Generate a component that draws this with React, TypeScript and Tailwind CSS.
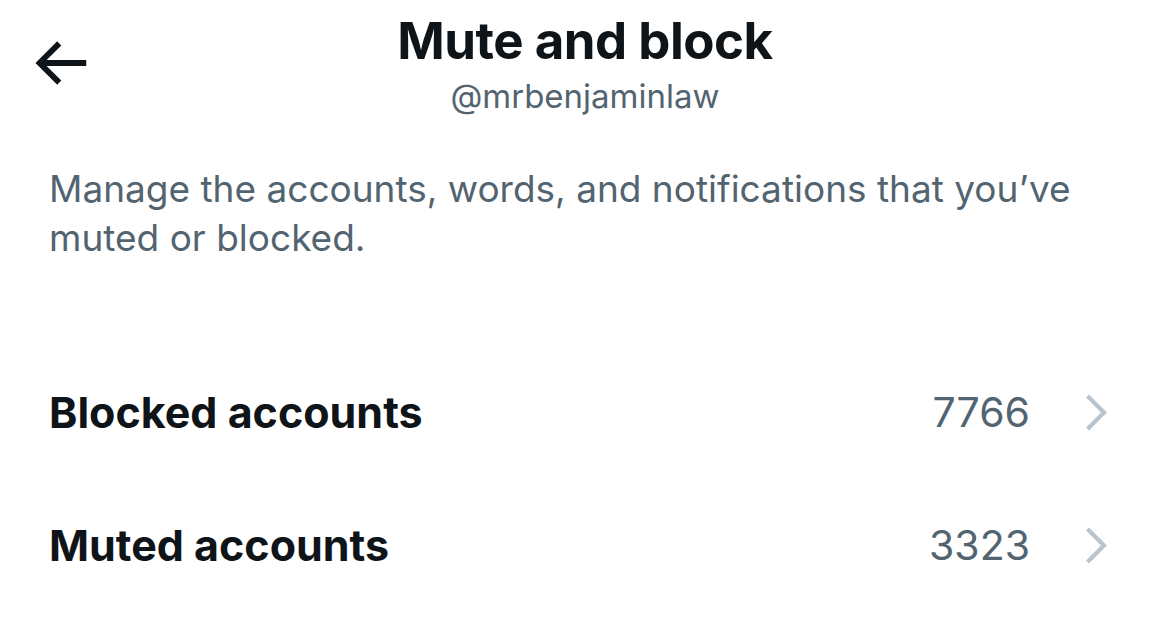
import React from "react";

const font = { fontFamily: "Inter, 'Noto Sans', sans-serif" };

function BackArrow() {
  return (
    <svg viewBox="0 0 24 24" className="w-[70px] h-[70px] fill-[#0f1419]">
      <path d="M7.414 13l5.043 5.04-1.414 1.42L3.586 12l7.457-7.46 1.414 1.42L7.414 11H21v2H7.414z" />
    </svg>
  );
}

function Chevron() {
  return (
    <svg viewBox="0 0 24 24" className="w-[51px] h-[51px] fill-[#b9c4cd]">
      <path d="M14.586 12L7.543 4.96l1.414-1.42L17.414 12l-8.457 8.46-1.414-1.42L14.586 12z" />
    </svg>
  );
}

function Row(props: { label: string; count: string }) {
  return (
    <div className="flex items-center justify-between pl-[49px] pr-[49px] h-[133px]">
      <div className="text-[43px] font-bold text-[#0f1419]">{props.label}</div>
      <div className="flex items-center gap-[40px]">
        <div className="text-[41px] text-[#536471]">{props.count}</div>
        <Chevron />
      </div>
    </div>
  );
}

export default function App() {
  return (
    <div className="w-[1170px] h-[619px] bg-white overflow-hidden" style={font}>
      <div className="flex items-start pt-[8px]">
        <div className="w-[96px] pl-[25px] pt-[20px]">
          <BackArrow />
        </div>
        <div className="flex-1 flex flex-col items-center">
          <div className="text-[51px] leading-[66px] font-bold text-[#0f1419] tracking-[-0.5px]">
            Mute and block
          </div>
          <div className="text-[33px] leading-[44px] text-[#536471]">
            @mrbenjaminlaw
          </div>
        </div>
        <div className="w-[96px]" />
      </div>
      <div className="pl-[49px] pr-[40px] pt-[46px] text-[37px] leading-[49px] text-[#536471]">
        Manage the accounts, words, and notifications that you’ve muted or
        blocked.
      </div>
      <div className="pt-[84px]">
        <Row label="Blocked accounts" count="7766" />
        <Row label="Muted accounts" count="3323" />
      </div>
    </div>
  );
}
